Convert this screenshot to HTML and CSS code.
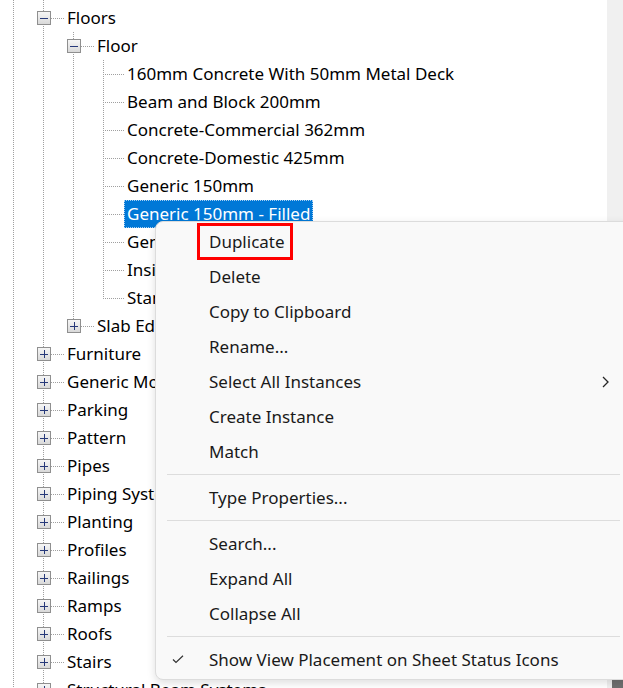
FILE: index.html
```html
<!DOCTYPE html>
<html lang="en">

<head>
    <meta charset="UTF-8">
    <meta name="viewport" content="width=device-width, initial-scale=1.0">
    <title>Project Browser - Families</title>
    <link rel="stylesheet" href="styles.css">
</head>

<body>
    <div class="pane">
        <!-- family tree -->
        <div class="tree">
            <div class="row stub"><span class="c pipe"></span><span class="c pipe"></span></div>

            <div class="row"><span class="c pipe"></span><span class="c k tee"><i class="box minus"></i></span><span class="label">Floors</span></div>
            <div class="row"><span class="c pipe"></span><span class="c pipe"></span><span class="c k tee"><i class="box minus"></i></span><span class="label">Floor</span></div>

            <div class="row"><span class="c pipe"></span><span class="c pipe"></span><span class="c pipe"></span><span class="c k tee"></span><span class="label">160mm Concrete With 50mm Metal Deck</span></div>
            <div class="row"><span class="c pipe"></span><span class="c pipe"></span><span class="c pipe"></span><span class="c k tee"></span><span class="label">Beam and Block 200mm</span></div>
            <div class="row"><span class="c pipe"></span><span class="c pipe"></span><span class="c pipe"></span><span class="c k tee"></span><span class="label">Concrete-Commercial 362mm</span></div>
            <div class="row"><span class="c pipe"></span><span class="c pipe"></span><span class="c pipe"></span><span class="c k tee"></span><span class="label">Concrete-Domestic 425mm</span></div>
            <div class="row"><span class="c pipe"></span><span class="c pipe"></span><span class="c pipe"></span><span class="c k tee"></span><span class="label">Generic 150mm</span></div>
            <div class="row"><span class="c pipe"></span><span class="c pipe"></span><span class="c pipe"></span><span class="c k tee"></span><span class="label selected">Generic 150mm - Filled</span></div>
            <div class="row"><span class="c pipe"></span><span class="c pipe"></span><span class="c pipe"></span><span class="c k tee"></span><span class="label">Generic 300mm</span></div>
            <div class="row"><span class="c pipe"></span><span class="c pipe"></span><span class="c pipe"></span><span class="c k tee"></span><span class="label">Insitu Concrete 225mm</span></div>
            <div class="row"><span class="c pipe"></span><span class="c pipe"></span><span class="c pipe"></span><span class="c k elbow"></span><span class="label">Standard Floor 300mm</span></div>

            <div class="row"><span class="c pipe"></span><span class="c pipe"></span><span class="c k elbow"><i class="box plus"></i></span><span class="label">Slab Edges</span></div>

            <div class="row"><span class="c pipe"></span><span class="c k tee"><i class="box plus"></i></span><span class="label">Furniture</span></div>
            <div class="row"><span class="c pipe"></span><span class="c k tee"><i class="box plus"></i></span><span class="label">Generic Models</span></div>
            <div class="row"><span class="c pipe"></span><span class="c k tee"><i class="box plus"></i></span><span class="label">Parking</span></div>
            <div class="row"><span class="c pipe"></span><span class="c k tee"><i class="box plus"></i></span><span class="label">Pattern</span></div>
            <div class="row"><span class="c pipe"></span><span class="c k tee"><i class="box plus"></i></span><span class="label">Pipes</span></div>
            <div class="row"><span class="c pipe"></span><span class="c k tee"><i class="box plus"></i></span><span class="label">Piping Systems</span></div>
            <div class="row"><span class="c pipe"></span><span class="c k tee"><i class="box plus"></i></span><span class="label">Planting</span></div>
            <div class="row"><span class="c pipe"></span><span class="c k tee"><i class="box plus"></i></span><span class="label">Profiles</span></div>
            <div class="row"><span class="c pipe"></span><span class="c k tee"><i class="box plus"></i></span><span class="label">Railings</span></div>
            <div class="row"><span class="c pipe"></span><span class="c k tee"><i class="box plus"></i></span><span class="label">Ramps</span></div>
            <div class="row"><span class="c pipe"></span><span class="c k tee"><i class="box plus"></i></span><span class="label">Roofs</span></div>
            <div class="row"><span class="c pipe"></span><span class="c k tee"><i class="box plus"></i></span><span class="label">Stairs</span></div>
            <div class="row"><span class="c pipe"></span><span class="c k tee"><i class="box plus"></i></span><span class="label">Structural Beam Systems</span></div>
        </div>

        <div class="vscroll">
            <div class="thumb"></div>
        </div>
    </div>

    <!-- right click menu -->
    <div class="menu">
        <div class="item"><span class="mark"></span><span class="hl">Duplicate</span></div>
        <div class="item"><span class="mark"></span>Delete</div>
        <div class="item"><span class="mark"></span>Copy to Clipboard</div>
        <div class="item"><span class="mark"></span>Rename...</div>
        <div class="item"><span class="mark"></span>Select All Instances
            <svg class="arrow" width="7" height="12" viewBox="0 0 7 12"><polyline points="1,1 6,6 1,11" fill="none" stroke="#262626" stroke-width="1.3"/></svg>
        </div>
        <div class="item"><span class="mark"></span>Create Instance</div>
        <div class="item"><span class="mark"></span>Match</div>
        <div class="sep"></div>
        <div class="item"><span class="mark"></span>Type Properties...</div>
        <div class="sep"></div>
        <div class="item"><span class="mark"></span>Search...</div>
        <div class="item"><span class="mark"></span>Expand All</div>
        <div class="item"><span class="mark"></span>Collapse All</div>
        <div class="sep"></div>
        <div class="item">
            <span class="mark"><svg width="12" height="9" viewBox="0 0 12 9"><polyline points="1,4.5 4,7.5 11,0.8" fill="none" stroke="#333" stroke-width="1.2"/></svg></span>
            Show View Placement on Sheet Status Icons
        </div>
    </div>
</body>

</html>
```

FILE: styles.css
```css
body {
    margin: 0;
    width: 623px;
    height: 688px;
    overflow: hidden;
    position: relative;
    background: #fff;
    font-family: "Noto Sans", "Open Sans", sans-serif;
}

.pane {
    display: flex;
    height: 688px;
}

.tree {
    flex: 1;
    overflow: hidden;
    font-size: 17px;
    color: #000;
}

.vscroll {
    width: 16px;
    background: #f0f0f0;
    display: flex;
    flex-direction: column;
    justify-content: flex-end;
    align-items: flex-end;
}

.vscroll .thumb {
    width: 11px;
    height: 9px;
    background: #6f6f6f;
}

/* tree rows */
.row {
    display: flex;
    align-items: center;
    height: 28px;
    white-space: nowrap;
}

.row.stub {
    height: 4px;
}

.c {
    flex: none;
    width: 30px;
    height: 100%;
    display: flex;
    align-items: center;
    background-repeat: no-repeat;
}

.c.k {
    width: 34px;
}

/* dotted connector lines */
.pipe {
    background-image: repeating-linear-gradient(to bottom, #a0a0a0 0 1px, transparent 1px 2px);
    background-size: 1px 100%;
    background-position: 13px 0;
}

.tee {
    background-image:
        repeating-linear-gradient(to bottom, #a0a0a0 0 1px, transparent 1px 2px),
        repeating-linear-gradient(to right, #a0a0a0 0 1px, transparent 1px 2px);
    background-size: 1px 100%, 21px 1px;
    background-position: 13px 0, 13px 14px;
}

.elbow {
    background-image:
        repeating-linear-gradient(to bottom, #a0a0a0 0 1px, transparent 1px 2px),
        repeating-linear-gradient(to right, #a0a0a0 0 1px, transparent 1px 2px);
    background-size: 1px 15px, 21px 1px;
    background-position: 13px 0, 13px 14px;
}

.box {
    display: block;
    box-sizing: border-box;
    width: 14px;
    height: 14px;
    margin-left: 7px;
    border: 1px solid #8f8f8f;
    background: linear-gradient(#f6f6f6, #d9d9d9);
}

.box.minus {
    background:
        linear-gradient(#27397a, #27397a) center / 8px 1px no-repeat,
        linear-gradient(#f6f6f6, #d9d9d9);
}

.box.plus {
    background:
        linear-gradient(#27397a, #27397a) center / 8px 1px no-repeat,
        linear-gradient(#27397a, #27397a) center / 1px 8px no-repeat,
        linear-gradient(#f6f6f6, #d9d9d9);
}

.label {
    padding: 0 3px;
    line-height: 28px;
}

.label.selected {
    background: #0078d7;
    color: #fff;
    outline: 1px dotted #a8d0f2;
    outline-offset: -1px;
}

/* context menu */
.menu {
    position: absolute;
    left: 155px;
    top: 221px;
    width: 475px;
    padding: 2px 0;
    background: #f9f9f9;
    border: 1px solid #dcdcdc;
    border-radius: 8px;
    box-shadow: 0 3px 9px rgba(0, 0, 0, 0.13);
    font-size: 17px;
    color: #1a1a1a;
}

.item {
    display: flex;
    align-items: center;
    height: 35px;
    padding-right: 22px;
    white-space: nowrap;
}

.item .mark {
    flex: none;
    width: 53px;
    display: flex;
    align-items: center;
    padding-left: 16px;
    box-sizing: border-box;
}

.item .arrow {
    margin-left: auto;
}

.item .hl {
    margin-left: -12px;
    padding: 4px 5px 4px 9px;
    border: 3px solid #ff0000;
    line-height: 23px;
}

.sep {
    height: 1px;
    margin: 5px 11px;
    background: #dddddd;
}
```
